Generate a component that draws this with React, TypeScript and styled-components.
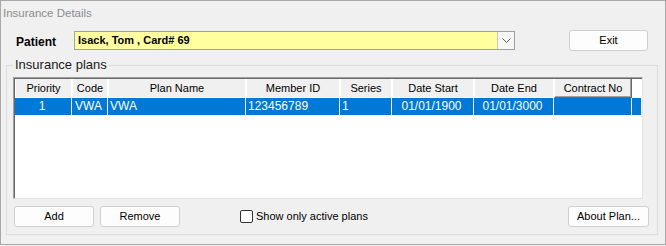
import styled, { createGlobalStyle } from "styled-components";

const GlobalStyle = createGlobalStyle`
  html, body {
    margin: 0;
    padding: 0;
    background: #f0f0f0;
  }
  * {
    box-sizing: border-box;
  }
`;

const Window = styled.div`
  width: 666px;
  height: 245px;
  border: 1px solid #a9a9a9;
  background: #f0f0f0;
  display: flex;
  flex-direction: column;
  font-family: "Liberation Sans", Arial, sans-serif;
  color: #000;
`;

const TitleBar = styled.div`
  height: 23px;
  padding: 5px 0 0 2px;
  font-size: 11.5px;
  line-height: 14px;
  color: #8c8c8c;
`;

const TopRow = styled.div`
  display: flex;
  align-items: center;
  height: 21px;
  margin-top: 6px;
  padding-left: 15px;
`;

const FieldLabel = styled.span`
  width: 58px;
  font-size: 12px;
  font-weight: 700;
  line-height: 14px;
  padding-top: 2px;
`;

const Combo = styled.div`
  width: 441px;
  height: 19px;
  display: flex;
  border: 1px solid #a0a0a0;
  background: #ffffa0;
`;

const ComboText = styled.span`
  flex: 1;
  padding: 0 0 2px 3px;
  font-size: 11px;
  font-weight: 700;
  line-height: 17px;
`;

const ComboArrow = styled.span`
  width: 17px;
  display: flex;
  align-items: center;
  justify-content: center;
  background: #f7f7f7;
  border-left: 1px solid #c8c8c8;
`;

const Button = styled.button<{ $width: number; $gap?: number }>`
  width: ${(p) => p.$width}px;
  height: 21px;
  margin-left: ${(p) => p.$gap ?? 0}px;
  padding: 0 0 1px;
  border: 1px solid #d0d0d0;
  border-radius: 3px;
  background: #fdfdfd;
  font-family: "Liberation Sans", Arial, sans-serif;
  font-size: 11px;
  color: #000;
`;

const Group = styled.div`
  position: relative;
  width: 652px;
  height: 170px;
  margin: 14px 0 0 5px;
  padding: 11px 0 0 6px;
  border: 1px solid #dcdcdc;
`;

const Legend = styled.span`
  position: absolute;
  top: -9px;
  left: 6px;
  padding: 0 2px;
  background: #f0f0f0;
  font-size: 13px;
  line-height: 15px;
  color: #1a1a1a;
`;

const Table = styled.div`
  width: 630px;
  height: 122px;
  background: #fff;
  border: 1px solid;
  border-color: #a0a0a0 #e3e3e3 #e3e3e3 #a0a0a0;
  box-shadow: inset 1px 1px 0 #696969;
  padding: 1px 0 0 1px;
`;

const columns = "57px 36px 138px 94px 52px 82px 80px 78px 1fr";

const HeaderRow = styled.div`
  display: grid;
  grid-template-columns: ${columns};
  height: 19px;
`;

const HeadCell = styled.div<{ $last?: boolean; $filler?: boolean }>`
  background: ${(p) => (p.$filler ? "#fff" : "#f0f0f0")};
  border-right: ${(p) =>
    p.$filler ? "none" : p.$last ? "1px solid #696969" : "1px solid #fff"};
  border-left: ${(p) => (p.$filler ? "none" : "1px solid #fff")};
  border-bottom: ${(p) =>
    p.$filler ? "none" : p.$last ? "1px solid #696969" : "1px solid #fff"};
  box-shadow: ${(p) => (p.$last ? "inset -1px -1px 0 #a0a0a0" : "none")};
  font-size: 11px;
  line-height: 18px;
  text-align: center;
  white-space: nowrap;
  overflow: hidden;
`;

const DataRow = styled.div<{ $selected?: boolean }>`
  display: grid;
  grid-template-columns: ${columns};
  height: 17px;
  background: ${(p) => (p.$selected ? "#0078d7" : "#fff")};
  color: ${(p) => (p.$selected ? "#fff" : "#000")};
`;

const Cell = styled.div<{ $align?: "left" | "center" }>`
  border-right: 1px solid #fff;
  padding: 0 2px 0 ${(p) => (p.$align === "center" ? 0 : 2)}px;
  font-size: 12px;
  line-height: 17px;
  text-align: ${(p) => p.$align ?? "left"};
  white-space: nowrap;
  overflow: hidden;
`;

const BottomRow = styled.div`
  display: flex;
  align-items: center;
  height: 21px;
  margin-top: 7px;
  padding: 0 8px 0 1px;
`;

const CheckWrap = styled.label`
  display: flex;
  align-items: center;
  margin-left: 60px;
  font-size: 11px;
  line-height: 13px;
`;

const CheckBox = styled.span`
  width: 13px;
  height: 13px;
  margin-right: 3px;
  border: 1px solid #333;
  border-radius: 2px;
  background: #fff;
`;

const Spacer = styled.div`
  flex: 1;
`;

const headers = [
  "Priority",
  "Code",
  "Plan Name",
  "Member ID",
  "Series",
  "Date Start",
  "Date End",
  "Contract No",
];

const plans = [
  {
    priority: "1",
    code: "VWA",
    name: "VWA",
    member: "123456789",
    series: "1",
    start: "01/01/1900",
    end: "01/01/3000",
    contract: "",
  },
];

export default function App() {
  return (
    <>
      <GlobalStyle />
      <Window>
        <TitleBar>Insurance Details</TitleBar>
        <TopRow>
          <FieldLabel>Patient</FieldLabel>
          <Combo>
            <ComboText>Isack, Tom , Card# 69</ComboText>
            <ComboArrow>
              <svg width="9" height="6" viewBox="0 0 9 6">
                <polyline
                  points="0.5,0.5 4.5,4.5 8.5,0.5"
                  fill="none"
                  stroke="#606060"
                  strokeWidth="1"
                />
              </svg>
            </ComboArrow>
          </Combo>
          <Button $width={79} $gap={54}>
            Exit
          </Button>
        </TopRow>
        <Group>
          <Legend>Insurance plans</Legend>
          <Table>
            <HeaderRow>
              {headers.map((h, i) => (
                <HeadCell key={h} $last={i === headers.length - 1}>
                  {h}
                </HeadCell>
              ))}
              <HeadCell $filler />
            </HeaderRow>
            {plans.map((p) => (
              <DataRow key={p.member} $selected>
                <Cell $align="center">{p.priority}</Cell>
                <Cell $align="center">{p.code}</Cell>
                <Cell>{p.name}</Cell>
                <Cell>{p.member}</Cell>
                <Cell>{p.series}</Cell>
                <Cell $align="center">{p.start}</Cell>
                <Cell $align="center">{p.end}</Cell>
                <Cell>{p.contract}</Cell>
                <Cell />
              </DataRow>
            ))}
          </Table>
          <BottomRow>
            <Button $width={80}>Add</Button>
            <Button $width={80} $gap={6}>
              Remove
            </Button>
            <CheckWrap>
              <CheckBox />
              Show only active plans
            </CheckWrap>
            <Spacer />
            <Button $width={81}>About Plan...</Button>
          </BottomRow>
        </Group>
      </Window>
    </>
  );
}
